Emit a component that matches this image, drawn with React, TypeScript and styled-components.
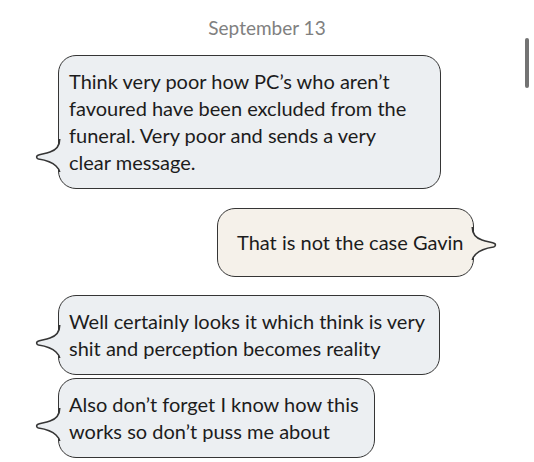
import styled, { createGlobalStyle } from "styled-components";

const GlobalStyle = createGlobalStyle`
  html, body {
    margin: 0;
    padding: 0;
    background: #ffffff;
  }
  body {
    font-family: Lato, "Liberation Sans", sans-serif;
  }
`;

interface BubbleProps {
  side: "in" | "out";
  width: number;
  gap: number;
  lines: string[];
}

// iMessage-style tail, drawn for the left side and mirrored for the right
const TAIL =
  "M24.75 0 C24.75 6 21 11 15 13 C10 14.7 5 15.5 2.5 16.5 C1 17.3 1.5 19.5 3.5 20 C10 21 17 23 21 27 C23 29 24.5 31 24.75 33";

const TailShape: React.FC<{ side: "in" | "out" }> = ({ side }) => {
  const bg = side === "in" ? "#eceff2" : "#f5f1ea";
  return (
    <Tail $side={side} viewBox="0 0 30 34">
      <path d={`${TAIL} L30 33 L30 0 Z`} fill={bg} />
      <path d={TAIL} fill="none" stroke="#353535" strokeWidth={1.6} />
    </Tail>
  );
};

const Bubble: React.FC<BubbleProps> = ({ side, width, gap, lines }) => {
  return (
    <BubbleBox $side={side} $width={width} $gap={gap}>
      {lines.map((l) => (
        <Line key={l}>{l}</Line>
      ))}
      <TailShape side={side} />
    </BubbleBox>
  );
};

export default function App() {
  return (
    <Screen>
      <GlobalStyle />
      <DateLabel>September 13</DateLabel>
      <Thread>
        <Bubble
          side="in"
          width={383}
          gap={0}
          lines={[
            "Think very poor how PC’s who aren’t",
            "favoured have been excluded from the",
            "funeral. Very poor and sends a very",
            "clear message.",
          ]}
        />
        <Bubble
          side="out"
          width={257}
          gap={19}
          lines={["That is not the case Gavin"]}
        />
        <Bubble
          side="in"
          width={382}
          gap={18}
          lines={[
            "Well certainly looks it which think is very",
            "shit and perception becomes reality",
          ]}
        />
        <Bubble
          side="in"
          width={317}
          gap={3}
          lines={["Also don’t forget I know how this", "works so don’t puss me about"]}
        />
      </Thread>
      <ScrollThumb />
    </Screen>
  );
}

const Screen = styled.div`
  position: relative;
  width: 534px;
  height: 462px;
  overflow: hidden;
  background: #ffffff;
`;

const DateLabel = styled.div`
  padding-top: 15px;
  height: 26px;
  line-height: 26px;
  text-align: center;
  font-size: 19px;
  color: #808080;
  margin-bottom: 14px;
`;

const Thread = styled.div`
  display: flex;
  flex-direction: column;
  padding: 0 60px 0 58px;
`;

const BubbleBox = styled.div<{ $side: "in" | "out"; $width: number; $gap: number }>`
  position: relative;
  box-sizing: border-box;
  width: ${(p) => p.$width}px;
  margin-top: ${(p) => p.$gap}px;
  align-self: ${(p) => (p.$side === "in" ? "flex-start" : "flex-end")};
  border: 1.5px solid #353535;
  border-radius: 18px;
  background: ${(p) => (p.$side === "in" ? "#eceff2" : "#f5f1ea")};
  padding: ${(p) => (p.$side === "in" ? "12px 10px" : "20px 10px 20px 19px")};
  color: #1c1c1c;
  font-size: 20px;
  line-height: 27px;
`;

const Line = styled.span`
  display: block;
  white-space: nowrap;
`;

const Tail = styled.svg<{ $side: "in" | "out" }>`
  position: absolute;
  bottom: 15px;
  width: 30px;
  height: 34px;
  overflow: visible;
  ${(p) =>
    p.$side === "in"
      ? "left: -24px;"
      : "right: -24px; transform: scaleX(-1);"}
`;

const ScrollThumb = styled.div`
  position: absolute;
  left: 525px;
  top: 38px;
  width: 4px;
  height: 50px;
  border-radius: 2px;
  background: #737373;
`;
